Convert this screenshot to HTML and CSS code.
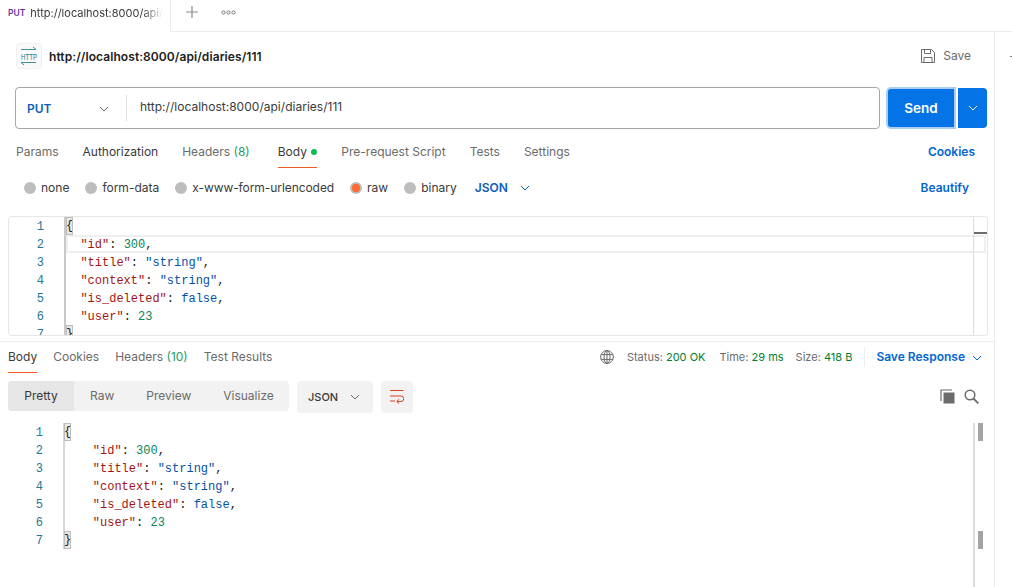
FILE: index.html
```html
<!DOCTYPE html>
<html lang="en">
<head>
<meta charset="utf-8">
<title>PUT request</title>
<link rel="stylesheet" href="styles.css">
</head>
<body>
<div class="tabbar">
  <div class="tab"><span class="tab-method">PUT</span><span class="tab-url">http://localhost:8000/api/</span></div>
  <div class="tabbar-rest">
    <svg class="plus" width="12" height="12" viewBox="0 0 12 12"><path d="M6 0v12M0 6h12" stroke="#8a8a8a" stroke-width="1.200" fill="none"/></svg>
    <svg class="dots" width="15" height="5" viewBox="0 0 15 5"><circle cx="2.500" cy="2.500" r="1.600" fill="none" stroke="#777"/><circle cx="7.500" cy="2.500" r="1.600" fill="none" stroke="#777"/><circle cx="12.500" cy="2.500" r="1.600" fill="none" stroke="#777"/></svg>
  </div>
</div>
<div class="app">
  <main class="main">
    <header class="req-head">
      <div class="http-icon"><svg width="18" height="20" viewBox="0 0 18 20"><path d="M1 3.500h15M13 1l3 2.500M1 16.500h15M1 16.500l3 2.500" stroke="#3f8f99" stroke-width="1" fill="none"/><text x="1" y="13.500" class="http-text" textLength="16" lengthAdjust="spacingAndGlyphs">HTTP</text></svg></div>
      <div class="req-title">http://localhost:8000/api/diaries/111</div>
      <div class="save">
        <svg width="16" height="16" viewBox="0 0 16 16"><path d="M1.500 1.500h10l3 3v10h-13zM4.500 1.500v4h6v-4M4 14.500v-5h8v5" stroke="#6b6b6b" stroke-width="1" fill="none"/></svg>
        <span>Save</span>
      </div>
    </header>
    <div class="url-row">
      <div class="url-box">
        <div class="method"><span>PUT</span><svg class="chev" width="10" height="6" viewBox="0 0 10 6"><path d="M1 1l4 4 4-4" stroke="#6b6b6b" fill="none"/></svg></div>
        <div class="url">http://localhost:8000/api/diaries/111</div>
      </div>
      <button class="send">Send</button>
      <button class="send-more"><svg width="10" height="6" viewBox="0 0 10 6"><path d="M1 1l4 4 4-4" stroke="#fff" fill="none"/></svg></button>
    </div>
    <nav class="req-tabs">
      <span class="rt">Params</span>
      <span class="rt dark">Authorization</span>
      <span class="rt wide">Headers <i class="count">(8)</i></span>
      <span class="rt dark active">Body <b class="dot"></b></span>
      <span class="rt">Pre-request Script</span>
      <span class="rt">Tests</span>
      <span class="rt">Settings</span>
      <span class="link cookies">Cookies</span>
    </nav>
    <div class="body-types">
      <span class="radio"><b class="ball"></b>none</span>
      <span class="radio"><b class="ball"></b>form-data</span>
      <span class="radio tight"><b class="ball"></b>x-www-form-urlencoded</span>
      <span class="radio"><b class="ball on"></b>raw</span>
      <span class="radio"><b class="ball"></b>binary</span>
      <span class="lang">JSON<svg width="10" height="6" viewBox="0 0 10 6"><path d="M1 1l4 4 4-4" stroke="#0265d2" fill="none"/></svg></span>
      <span class="link beautify">Beautify</span>
    </div>
    <section class="editor">
      <div class="gutter">
        <div>1</div><div>2</div><div>3</div><div>4</div><div>5</div><div>6</div><div>7</div>
      </div>
      <div class="code">
        <div class="ln"><span class="br">{</span></div>
        <div class="ln cur">  <span class="k">"id"</span>: <span class="n">300</span>,</div>
        <div class="ln">  <span class="k">"title"</span>: <span class="s">"string"</span>,</div>
        <div class="ln">  <span class="k">"context"</span>: <span class="s">"string"</span>,</div>
        <div class="ln">  <span class="k">"is_deleted"</span>: <span class="s">false</span>,</div>
        <div class="ln">  <span class="k">"user"</span>: <span class="n">23</span></div>
        <div class="ln"><span class="br">}</span></div>
      </div>
      <div class="scroll-col"><div class="scroll-mark"></div></div>
    </section>
    <div class="res-head">
      <span class="rs dark active">Body</span>
      <span class="rs">Cookies</span>
      <span class="rs">Headers <i class="count">(10)</i></span>
      <span class="rs">Test Results</span>
      <div class="res-meta">
        <svg width="14" height="14" viewBox="0 0 14 14"><g stroke="#6b6b6b" fill="none"><circle cx="7" cy="7" r="6.400"/><ellipse cx="7" cy="7" rx="3" ry="6.400"/><path d="M1 4.600h12M1 9.400h12M7 .6v12.800"/></g></svg>
        <span class="stat first">Status: <em>200 OK</em></span>
        <span class="stat">Time: <em>29 ms</em></span>
        <span class="stat size">Size: <em>418 B</em></span>
        <span class="sep"></span>
        <span class="link save-res">Save Response<svg width="10" height="6" viewBox="0 0 10 6"><path d="M1 1l4 4 4-4" stroke="#0265d2" fill="none"/></svg></span>
      </div>
    </div>
    <div class="res-tools">
      <div class="seg">
        <span class="seg-item sel">Pretty</span>
        <span class="seg-item raw">Raw</span>
        <span class="seg-item preview">Preview</span>
        <span class="seg-item vis">Visualize</span>
      </div>
      <div class="fmt">JSON<svg width="10" height="6" viewBox="0 0 10 6"><path d="M1 1l4 4 4-4" stroke="#6b6b6b" fill="none"/></svg></div>
      <div class="wrap"><svg width="14" height="14" viewBox="0 0 14 14"><path d="M0 .5h13.500M0 6h11a2.700 2.700 0 0 1 0 5.500H7M9.200 9.200L6.800 11.500l2.400 2.300M0 11h5" stroke="#d8451c" fill="none"/></svg></div>
      <div class="res-icons">
        <svg width="15" height="15" viewBox="0 0 15 15"><path d="M3.500 3.500h11v11h-11z" fill="#6b6b6b"/><path d="M1 12V1h11" stroke="#6b6b6b" stroke-width="1.200" fill="none"/></svg>
        <svg width="15" height="15" viewBox="0 0 15 15"><circle cx="6" cy="6" r="4.800" stroke="#6b6b6b" stroke-width="1.500" fill="none"/><path d="M9.500 9.500l4.800 4.800" stroke="#6b6b6b" stroke-width="1.800"/></svg>
      </div>
    </div>
    <section class="viewer">
      <div class="gutter res-gutter">
        <div>1</div><div>2</div><div>3</div><div>4</div><div>5</div><div>6</div><div>7</div>
      </div>
      <div class="code res-code">
        <div class="ln"><span class="br">{</span></div>
        <div class="ln">    <span class="k">"id"</span>: <span class="n">300</span>,</div>
        <div class="ln">    <span class="k">"title"</span>: <span class="s">"string"</span>,</div>
        <div class="ln">    <span class="k">"context"</span>: <span class="s">"string"</span>,</div>
        <div class="ln">    <span class="k">"is_deleted"</span>: <span class="s">false</span>,</div>
        <div class="ln">    <span class="k">"user"</span>: <span class="n">23</span></div>
        <div class="ln"><span class="br">}</span></div>
      </div>
      <div class="scroll-col res-scroll"><div class="thumb top"></div><div class="thumb bottom"></div></div>
    </section>
  </main>
  <aside class="side"><span class="side-mark"></span></aside>
</div>
</body>
</html>
```
FILE: styles.css
```css
* { box-sizing: border-box; }
html, body { margin: 0; height: 100%; }
body {
  width: 1012px;
  height: 587px;
  overflow: hidden;
  background: #fff;
  color: #212121;
  font: 12px/16px Inter, "Liberation Sans", sans-serif;
  display: flex;
  flex-direction: column;
}
i, em { font-style: normal; }

/* top tab strip */
.tabbar { height: 32px; display: flex; flex: none; }
.tab {
  width: 171px;
  padding: 5px 0 0 8px;
  border-right: 1px solid #ededed;
  white-space: nowrap;
  overflow: hidden;
  display: flex;
  gap: 5px;
}
.tab-method { font-size: 8.500px; font-weight: 600; color: #623497; line-height: 16px; }
.tab-url {
  color: #3a3a3a;
  width: 133px;
  font-size: 11px;
  -webkit-mask-image: linear-gradient(to right, #000 85%, transparent 100%);
  mask-image: linear-gradient(to right, #000 85%, transparent 100%);
}
.tabbar-rest { flex: 1; border-bottom: 1px solid #ededed; display: flex; align-items: flex-start; }
.plus { margin: 6px 0 0 15px; }
.dots { margin: 10px 0 0 23px; }

.app { flex: 1; display: flex; min-height: 0; }
.main { width: 995px; flex: none; display: flex; flex-direction: column; border-right: 1px solid #ededed; }
.side { flex: 1; position: relative; }
.side-mark { position: absolute; top: 24px; left: 15px; width: 2px; height: 1px; background: #777; }

/* request header */
.req-head { height: 55px; padding: 11px 23px 0 16px; display: flex; align-items: flex-start; flex: none; }
.http-icon {
  width: 26px; height: 26px;
  background: #f9f9f9;
  border: 1px solid #f0f0f0;
  border-radius: 4px;
  display: flex; align-items: center; justify-content: center;
}
.http-text { font: 9px "Liberation Sans", sans-serif; fill: #1f7a85; }
.req-title { margin: 6px 0 0 7px; font-weight: 600; font-size: 12px; letter-spacing: .08px; color: #212121; flex: 1; }
.save { display: flex; gap: 7px; align-items: center; color: #6b6b6b; height: 26px; }

/* url */
.url-row { display: flex; padding-left: 15px; flex: none; height: 42px; align-items: center; }
.url-box {
  width: 865px; height: 42px;
  border: 1px solid #a6a6a6;
  border-radius: 4px;
  display: flex; align-items: center;
}
.method {
  width: 111px; height: 26px;
  border-right: 1px solid #e0e0e0;
  padding: 1px 17px 0 11px;
  display: flex; align-items: center; justify-content: space-between;
  font-weight: 600; color: #0d5eb8;
}
.url { padding: 0 0 2px 13px; color: #3a3a3a; letter-spacing: .02px; }
.send {
  margin-left: 7px;
  width: 68px; height: 40px;
  background: #0373e6;
  border: 0;
  outline: 2px solid #a9cdf5;
  outline-offset: -1px;
  border-radius: 4px 0 0 4px;
  color: #fff;
  font: 600 13.500px Inter, "Liberation Sans", sans-serif;
}
.send-more {
  margin-left: 3px;
  width: 29px; height: 40px;
  background: #0373e6;
  border: 0;
  border-radius: 0 4px 4px 0;
  display: flex; align-items: center; justify-content: center;
}

/* request tabs */
.req-tabs { height: 39px; padding: 15px 19px 0 16px; display: flex; flex: none; color: #6b6b6b; }
.rt { margin-right: 24px; height: 24px; white-space: nowrap; }
.rt.wide { margin-right: 28px; }
.rt.dark { color: #3a3a3a; }
.count { color: #1f9d63; }
.active { position: relative; }
.active::after { content: ""; position: absolute; left: 0; right: 0; bottom: 0; height: 1px; background: #f15a24; }
.dot { display: inline-block; width: 6px; height: 6px; border-radius: 50%; background: #0cbb52; margin-left: 1px; vertical-align: 1px; }
.link { color: #0265d2; font-weight: 600; }
.cookies { margin-left: auto; }

/* body type */
.body-types { height: 48px; padding: 12px 25px 0 24px; display: flex; align-items: flex-start; flex: none; color: #3a3a3a; }
.radio { display: flex; gap: 5px; margin-right: 16px; white-space: nowrap; height: 16px; align-items: center; }
.radio.tight { letter-spacing: -.07px; }
.ball { width: 12px; height: 12px; border-radius: 50%; background: #bdbdbd; }
.ball.on { background: radial-gradient(circle, #ff6c37 0 4px, #bdbdbd 4.500px); }
.lang { display: flex; align-items: center; gap: 12px; height: 16px; color: #0d5eb8; font-weight: 600; margin-left: 2px; }
.beautify { margin-left: auto; }

/* editors */
.editor {
  margin-left: 8px;
  width: 980px; height: 120px;
  border: 1px solid #e6e6e6;
  border-radius: 3px;
  display: flex;
  overflow: hidden;
  flex: none;
  position: relative;
}
.gutter {
  width: 57px; flex: none;
  padding: 0 20px 0 0;
  text-align: right;
  border-right: 2px solid #c9c9c9;
  color: #237893;
  font: 12px/20px "Liberation Mono", monospace;
}
.gutter div { height: 18px; }
.code {
  flex: 1;
  font: 12px/20px "Liberation Mono", monospace;
  color: #212121;
  min-width: 0;
}
.ln { height: 18px; white-space: pre; }
.cur { outline: 2px solid #efefef; outline-offset: -2px; margin-right: -13px; position: relative; }
.br { display: inline-block; width: 7px; height: 18px; line-height: 18px; vertical-align: top; background: #e8e8e8; outline: 1px solid #bdbdbd; outline-offset: -1px; }
.k { color: #a31515; }
.s { color: #0451a5; }
.n { color: #098658; }
.scroll-col { width: 14px; flex: none; border-left: 1px solid #dcdcdc; position: relative; }
.scroll-mark { position: absolute; top: 15px; left: 0; right: 0; height: 2px; background: #6b6b6b; }

/* response */
.res-head {
  margin-top: 5px;
  height: 32px;
  border-top: 1px solid #ededed;
  padding: 7px 12px 0 8px;
  display: flex;
  color: #6b6b6b;
  flex: none;
}
.rs { margin-right: 16px; height: 24px; white-space: nowrap; }
.rs.dark { color: #3a3a3a; }
.res-meta { margin-left: auto; display: flex; align-items: flex-start; height: 16px; font-size: 11px; }
.res-meta svg:first-child { margin: 1px 0 0; }
.stat { margin-left: 14px; white-space: nowrap; }
.stat.first { margin-left: 13px; }
.stat.size { margin-left: 12px; }
.stat em { color: #007f31; }
.sep { width: 1px; height: 20px; background: #ededed; margin: -2px 11px 0 12px; }
.save-res { display: flex; align-items: center; gap: 7px; font-size: 12px; white-space: nowrap; height: 16px; }

.res-tools { height: 50px; padding: 8px 15px 0 8px; display: flex; align-items: flex-start; flex: none; }
.seg { display: flex; height: 30px; width: 281px; background: #f2f2f2; border-radius: 4px; overflow: hidden; color: #6b6b6b; line-height: 30px; }
.seg-item { white-space: nowrap; }
.sel { background: #e6e6e6; color: #3a3a3a; width: 66px; text-align: center; }
.raw { margin-left: 16px; }
.preview { margin-left: 32px; }
.vis { margin-left: 32px; }
.fmt {
  margin-left: 8px;
  width: 76px; height: 32px;
  background: #f2f2f2;
  border-radius: 4px;
  display: flex; align-items: center; justify-content: space-between;
  padding: 0 13px 0 11px;
  font-size: 11px; font-weight: 500; color: #3a3a3a;
}
.wrap {
  margin-left: 8px;
  width: 32px; height: 32px;
  background: #f2f2f2;
  border-radius: 4px;
  display: flex; align-items: center; justify-content: center;
}
.res-icons { margin-left: auto; display: flex; gap: 9px; padding-top: 8px; }

.viewer { flex: 1; display: flex; margin-left: 8px; width: 980px; min-height: 0; }
.res-gutter { border-right-color: #d6d6d6; height: 126px; }
.res-code { margin-left: -1px; }
.res-scroll { width: 15px; border-left: 2px solid #dcdcdc; }
.thumb { position: absolute; left: 3px; width: 5px; height: 18px; background: #a3a3a3; }
.thumb.top { top: 0; }
.thumb.bottom { top: 108px; }
```
